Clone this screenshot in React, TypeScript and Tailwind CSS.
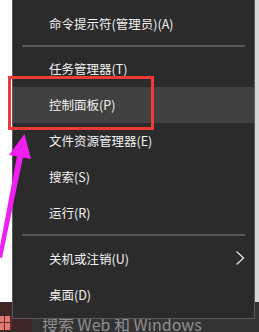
import React from "react";

const font = { fontFamily: '"Noto Sans CJK SC", "Noto Sans", sans-serif' };

function Item({ label, active, chevron }: { label: string; active?: boolean; chevron?: boolean }) {
  return (
    <div
      className={`flex h-[36px] items-center justify-between pl-[36px] pr-[9px] text-[12.5px] leading-none text-[#f2f2f2] ${
        active ? "bg-[#414141]" : ""
      }`}
    >
      <span className="mt-[1px]">{label}</span>
      {chevron && (
        <svg width="10" height="16" viewBox="0 0 10 16" className="mt-[-3px]">
          <path d="M1.5 1.5 L8.5 8 L1.5 14.5" fill="none" stroke="#dcdcdc" strokeWidth="1.4" />
        </svg>
      )}
    </div>
  );
}

function Sep({ top, bottom }: { top: string; bottom: string }) {
  return <div className={`${top} ${bottom} mx-[9px] h-[2px] bg-[#575757]`} />;
}

export default function App() {
  return (
    <div className="relative h-[332px] w-[259px] overflow-hidden bg-white" style={font}>
      <div className="flex h-full flex-col">
        <div className="flex flex-1">
          <div className="flex-1 bg-white" />
          <div className="w-[5px] bg-[#d6d6d6]" />
        </div>
        <div className="flex h-[30px] bg-[#333333]">
          <div className="flex w-[32px] items-end bg-[#3e2626]">
            <div className="mb-[2px] grid w-[12px] grid-cols-[4px_5px] grid-rows-[6px_7px] gap-[1px] bg-[#5a2a2a]">
              <div className="bg-[#e57a72]" />
              <div className="bg-[#e57a72]" />
              <div className="bg-[#e57a72]" />
              <div className="bg-[#e57a72]" />
            </div>
          </div>
          <div className="flex flex-1 items-end pl-[10px]">
            <span className="mb-[-2px] text-[16px] leading-[20px] text-[#8e8e8e]">搜索 Web 和 Windows</span>
          </div>
        </div>
      </div>

      <div className="absolute left-[12px] top-0 flex h-[319px] w-[243px] flex-col border-x border-b border-[#5a5a5a] bg-[#2b2b2b] pt-[6px]">
        <Item label="命令提示符(管理员)(A)" />
        <Sep top="mt-[3px]" bottom="mb-[4px]" />
        <Item label="任务管理器(T)" />
        <Item label="控制面板(P)" active />
        <Item label="文件资源管理器(E)" />
        <Item label="搜索(S)" />
        <Item label="运行(R)" />
        <Sep top="mt-[3px]" bottom="mb-[5px]" />
        <Item label="关机或注销(U)" chevron />
        <Item label="桌面(D)" />
      </div>

      <div className="absolute left-[8px] top-[76px] h-[54px] w-[146px] border-[3px] border-[#f03a3a]" />

      <svg className="absolute left-0 top-0" width="40" height="270" viewBox="0 0 40 270">
        <polygon points="24.5,134 9,155 31,159" fill="#f01ef0" />
        <polygon points="17,156 23,157 2,258 -2,257" fill="#f01ef0" />
      </svg>
    </div>
  );
}
